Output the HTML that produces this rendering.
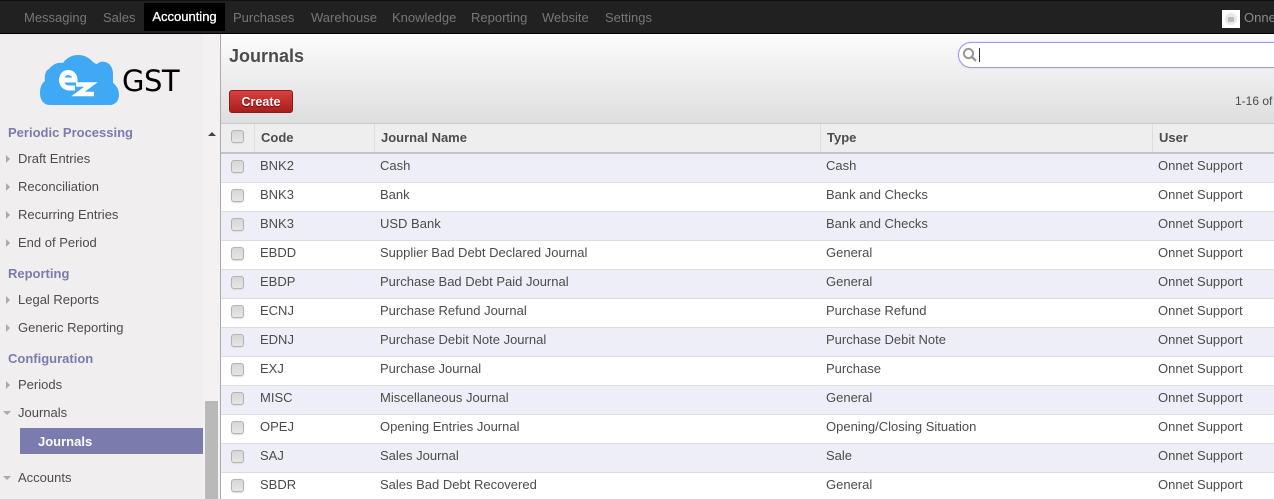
<!DOCTYPE html>
<html><head><meta charset="utf-8"><style>
html,body{margin:0;padding:0;width:1274px;height:499px;overflow:hidden;background:#fff}
body{font-family:"Liberation Sans",Arial,sans-serif;font-size:13px;color:#4c4c4c;position:relative}
.a{position:absolute;white-space:nowrap}
#top{left:0;top:0;width:1274px;height:34px;background:#212121;border-top:1px solid #111;box-sizing:border-box;border-bottom:1px solid #000}
.m{position:absolute;top:9px;line-height:15px;color:#777}
#act{position:absolute;left:144px;top:2px;width:81px;height:28px;background:#000;color:#fff;text-align:center;line-height:28px;-webkit-text-stroke:.3px #fff}
#side{left:0;top:34px;width:220px;height:465px;background:#f0eeee;border-right:1px solid #ababab}
.h{position:absolute;left:8px;font-weight:bold;font-size:13px;color:#7c7bad;line-height:16px}
.i{position:absolute;left:18px;line-height:16px;color:#4c4c4c}
.tr{position:absolute;left:6px;width:0;height:0;border-left:4px solid #aaa;border-top:4px solid transparent;border-bottom:4px solid transparent}
.td{position:absolute;left:3px;width:0;height:0;border-top:4px solid #aaa;border-left:4px solid transparent;border-right:4px solid transparent}
#hd{left:221px;top:34px;width:1053px;height:89px;background:linear-gradient(#fcfcfc,#dedede)}
#th{left:221px;top:123px;width:1053px;height:31px;box-sizing:border-box;background:#eee;border-top:1px solid #cacaca;border-bottom:2px solid #c4c4c4}
#th b{position:absolute;top:6px;line-height:15px;color:#4c4c4c}
#th i{position:absolute;top:0;width:1px;height:28px;background:#ddd}
.r{position:absolute;left:221px;width:1053px;height:29px;box-sizing:border-box;border-bottom:1px solid #dcdcdc;background:#fff}
.r.o{background:#eeeef8}
.r span{position:absolute;top:4px;line-height:15px}
.c{position:absolute;left:10px;top:6px;width:11px;height:11px;border:1px solid #b3b3b3;border-radius:3px;background:linear-gradient(#d6d6d6,#e6e6e6);box-shadow:0 1px 1px #ddd}
</style></head><body>
<div id="top" class="a">
<span class="m" style="left:24px">Messaging</span><span class="m" style="left:103px">Sales</span>
<div id="act">Accounting</div>
<span class="m" style="left:233px">Purchases</span><span class="m" style="left:311px">Warehouse</span><span class="m" style="left:392px">Knowledge</span><span class="m" style="left:471px">Reporting</span><span class="m" style="left:542px">Website</span><span class="m" style="left:605px">Settings</span>
<div style="position:absolute;left:1222px;top:9px;width:18px;height:18px;background:#fff"><div style="position:absolute;left:3px;top:3px;width:12px;height:12px;background:#e8e8e8;border-radius:50%"></div><div style="position:absolute;left:6px;top:7px;width:6px;height:5px;background:#bbb;border-radius:1px"></div></div>
<span class="m" style="left:1244px;color:#8a8a8a">Onnet Support</span>
</div>
<div id="side" class="a">
<svg style="position:absolute;left:40px;top:21px" width="80" height="51" viewBox="0 0 80 51"><path d="M10 50C3 50 0 44 0 38C0 32 2 28 5 26C4 20 6 15 9 14C13 9 18 7 23 8C27 2 33 0 38 0C44 0 48 2 52 6C54 8 56 9 57 9C59 7 62 6 65 7C70 8 73 13 73 19C73 23 73 26 73 28C77 31 79 35 79 40C79 46 75 50 70 50Z" fill="#3fa9f5"/><path d="M22 25H35C35 20 32 17.500 28 17.500C24 17.500 21.500 21 21.500 25C21.500 30 25 33 30 33H35" fill="none" stroke="#fff" stroke-width="5"/><path d="M36 29.500H51L38 39H54" fill="none" stroke="#fff" stroke-width="4.400"/></svg>
<span class="a" style="left:122px;top:30px;line-height:34px;color:#000;font-family:'DejaVu Sans','Liberation Sans',sans-serif;font-size:29px;letter-spacing:-.5px">GST</span>
<div class="a" style="left:203px;top:0;width:17px;height:465px;background:#f3f1f1"></div>
<div class="a" style="left:205px;top:367px;width:13px;height:98px;background:#b9b9b9"></div>
<div class="a" style="left:208px;top:98px;width:0;height:0;border-bottom:4px solid #444;border-left:4px solid transparent;border-right:4px solid transparent"></div>
<div class="h" style="top:91px">Periodic Processing</div>
<div class="tr" style="top:121px"></div><div class="i" style="top:117px">Draft Entries</div>
<div class="tr" style="top:149px"></div><div class="i" style="top:145px">Reconciliation</div>
<div class="tr" style="top:177px"></div><div class="i" style="top:173px">Recurring Entries</div>
<div class="tr" style="top:205px"></div><div class="i" style="top:201px">End of Period</div>
<div class="h" style="top:232px">Reporting</div>
<div class="tr" style="top:262px"></div><div class="i" style="top:258px">Legal Reports</div>
<div class="tr" style="top:290px"></div><div class="i" style="top:286px">Generic Reporting</div>
<div class="h" style="top:317px">Configuration</div>
<div class="tr" style="top:347px"></div><div class="i" style="top:343px">Periods</div>
<div class="td" style="top:377px"></div><div class="i" style="top:371px">Journals</div>
<div class="a" style="left:20px;top:394px;width:183px;height:26px;background:#7c7bad;color:#fff;font-weight:bold;line-height:28px;text-indent:18px">Journals</div>
<div class="td" style="top:442px"></div><div class="i" style="top:436px">Accounts</div>
</div>
<div id="hd" class="a">
<div class="a" style="left:8px;top:11px;font-size:18px;font-weight:bold;line-height:22px;color:#4c4c4c">Journals</div>
<div class="a" style="left:8px;top:56px;width:64px;height:23px;box-sizing:border-box;border:1px solid #8a1c1c;border-radius:3px;background:linear-gradient(#d9403f,#a81e1e);color:#fff;font-weight:bold;font-size:12.5px;text-align:center;line-height:22px;text-shadow:0 1px 1px #700">Create</div>
<div class="a" style="left:737px;top:8px;width:340px;height:26px;box-sizing:border-box;border:1px solid #9c9cf0;border-radius:13px;background:#fff;box-shadow:0 0 1px #9c9cf0">
<svg style="position:absolute;left:3px;top:4px" width="16" height="16" viewBox="0 0 16 16"><circle cx="6.500" cy="6.500" r="4.600" fill="none" stroke="#999" stroke-width="2"/><path d="M10 10l4 4" stroke="#999" stroke-width="2.400"/></svg>
<div class="a" style="left:20px;top:5px;width:1px;height:14px;background:#333"></div></div>
<div class="a" style="left:1014px;top:60px;line-height:15px;font-size:12px;color:#4c4c4c">1-16 of 16</div>
</div>
<div id="th" class="a">
<div class="c"></div>
<i style="left:33px"></i><b style="left:40px">Code</b>
<i style="left:153px"></i><b style="left:160px">Journal Name</b>
<i style="left:599px"></i><b style="left:606px">Type</b>
<i style="left:931px"></i><b style="left:938px">User</b>
</div>
<div class="r o" style="top:154px"><div class="c"></div><span style="left:39px">BNK2</span><span style="left:159px">Cash</span><span style="left:605px">Cash</span><span style="left:937px">Onnet Support</span></div>
<div class="r" style="top:183px"><div class="c"></div><span style="left:39px">BNK3</span><span style="left:159px">Bank</span><span style="left:605px">Bank and Checks</span><span style="left:937px">Onnet Support</span></div>
<div class="r o" style="top:212px"><div class="c"></div><span style="left:39px">BNK3</span><span style="left:159px">USD Bank</span><span style="left:605px">Bank and Checks</span><span style="left:937px">Onnet Support</span></div>
<div class="r" style="top:241px"><div class="c"></div><span style="left:39px">EBDD</span><span style="left:159px">Supplier Bad Debt Declared Journal</span><span style="left:605px">General</span><span style="left:937px">Onnet Support</span></div>
<div class="r o" style="top:270px"><div class="c"></div><span style="left:39px">EBDP</span><span style="left:159px">Purchase Bad Debt Paid Journal</span><span style="left:605px">General</span><span style="left:937px">Onnet Support</span></div>
<div class="r" style="top:299px"><div class="c"></div><span style="left:39px">ECNJ</span><span style="left:159px">Purchase Refund Journal</span><span style="left:605px">Purchase Refund</span><span style="left:937px">Onnet Support</span></div>
<div class="r o" style="top:328px"><div class="c"></div><span style="left:39px">EDNJ</span><span style="left:159px">Purchase Debit Note Journal</span><span style="left:605px">Purchase Debit Note</span><span style="left:937px">Onnet Support</span></div>
<div class="r" style="top:357px"><div class="c"></div><span style="left:39px">EXJ</span><span style="left:159px">Purchase Journal</span><span style="left:605px">Purchase</span><span style="left:937px">Onnet Support</span></div>
<div class="r o" style="top:386px"><div class="c"></div><span style="left:39px">MISC</span><span style="left:159px">Miscellaneous Journal</span><span style="left:605px">General</span><span style="left:937px">Onnet Support</span></div>
<div class="r" style="top:415px"><div class="c"></div><span style="left:39px">OPEJ</span><span style="left:159px">Opening Entries Journal</span><span style="left:605px">Opening/Closing Situation</span><span style="left:937px">Onnet Support</span></div>
<div class="r o" style="top:444px"><div class="c"></div><span style="left:39px">SAJ</span><span style="left:159px">Sales Journal</span><span style="left:605px">Sale</span><span style="left:937px">Onnet Support</span></div>
<div class="r" style="top:473px"><div class="c"></div><span style="left:39px">SBDR</span><span style="left:159px">Sales Bad Debt Recovered</span><span style="left:605px">General</span><span style="left:937px">Onnet Support</span></div>
</body></html>
